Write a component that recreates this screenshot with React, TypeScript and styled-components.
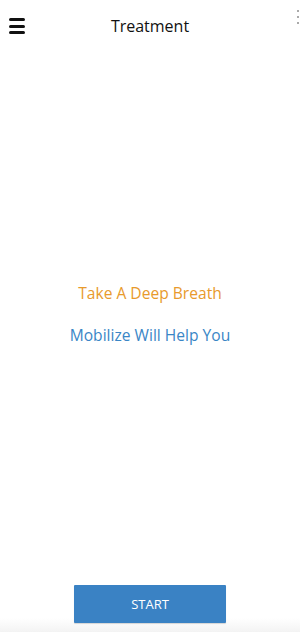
import React from 'react';
import styled, { createGlobalStyle } from 'styled-components';

const GlobalStyle = createGlobalStyle`
  html, body {
    margin: 0;
    padding: 0;
    background: #ffffff;
  }
  body {
    font-family: "Open Sans", "Liberation Sans", sans-serif;
  }
`;

export default function App() {
  return (
    <Page>
      <GlobalStyle />
      <Header>
        <MenuButton aria-label="menu">
          <Bar />
          <Bar />
          <Bar />
        </MenuButton>
        <Title>Treatment</Title>
        <MoreDots>
          <Dot />
          <Dot />
          <Dot />
        </MoreDots>
      </Header>
      <Body>
        <Message color="#e89a2c">Take A Deep Breath</Message>
        <Message color="#3a86c6">Mobilize Will Help You</Message>
      </Body>
      <Footer>
        <StartButton>START</StartButton>
      </Footer>
    </Page>
  );
}

const Page = styled.div`
  width: 300px;
  height: 632px;
  display: flex;
  flex-direction: column;
  overflow: hidden;
  background: #fff;
`;

const Header = styled.div`
  height: 52px;
  display: grid;
  grid-template-columns: 40px 1fr 40px;
  align-items: center;
`;

const MenuButton = styled.div`
  display: flex;
  flex-direction: column;
  gap: 3.5px;
  padding-left: 9px;
`;

const Bar = styled.div`
  width: 16px;
  height: 3px;
  border-radius: 1.5px;
  background: #111;
`;

const Title = styled.div`
  text-align: center;
  font-size: 16px;
  color: #111;
`;

const MoreDots = styled.div`
  display: flex;
  flex-direction: column;
  align-items: flex-end;
  gap: 4px;
  padding-right: 1px;
  align-self: start;
  margin-top: 10px;
`;

const Dot = styled.div`
  width: 2px;
  height: 2px;
  background: #aaa;
`;

const Body = styled.div`
  flex: 1;
  display: flex;
  flex-direction: column;
  align-items: center;
  justify-content: center;
  gap: 20px;
  padding-bottom: 9px;
`;

const Message = styled.div<{ color: string }>`
  font-size: 15.6px;
  color: ${(p) => p.color};
  line-height: 22px;
`;

const Footer = styled.div`
  height: 47px;
  display: flex;
  justify-content: center;
  align-items: flex-start;
  background: linear-gradient(to bottom, #ffffff 0%, #ffffff 70%, #f3f3f3 100%);
`;

const StartButton = styled.button`
  width: 152px;
  height: 38px;
  border: none;
  border-radius: 1px;
  background: #3a82c4;
  color: #fff;
  font-family: "Open Sans", "Liberation Sans", sans-serif;
  font-size: 13px;
  box-shadow: 0 1px 1px rgba(0, 0, 0, 0.15);
`;
